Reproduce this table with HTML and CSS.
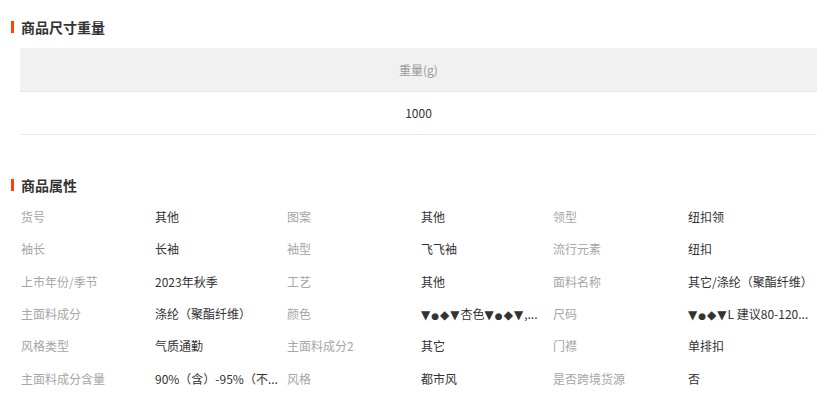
FILE: index.html
```html
<!DOCTYPE html>
<html lang="zh-CN">
<head>
<meta charset="utf-8">
<title>商品信息</title>
<link rel="stylesheet" href="styles.css">
</head>
<body>
<section class="section">
  <h2 class="title"><span class="bar"></span>商品尺寸重量</h2>
  <table class="size-table">
    <thead><tr><th>重量(g)</th></tr></thead>
    <tbody><tr><td>1000</td></tr></tbody>
  </table>
</section>
<section class="section attrs">
  <h2 class="title"><span class="bar"></span>商品属性</h2>
  <div class="grid">
    <div class="k">货号</div><div class="v">其他</div>
    <div class="k">图案</div><div class="v">其他</div>
    <div class="k">领型</div><div class="v">纽扣领</div>

    <div class="k">袖长</div><div class="v">长袖</div>
    <div class="k">袖型</div><div class="v">飞飞袖</div>
    <div class="k">流行元素</div><div class="v">纽扣</div>

    <div class="k">上市年份/季节</div><div class="v">2023年秋季</div>
    <div class="k">工艺</div><div class="v">其他</div>
    <div class="k">面料名称</div><div class="v">其它/涤纶（聚酯纤维）</div>

    <div class="k">主面料成分</div><div class="v">涤纶（聚酯纤维）</div>
    <div class="k">颜色</div><div class="v"><span class="sym">▼</span><span class="sym s">●</span><span class="sym">◆</span><span class="sym">▼</span>杏色<span class="sym">▼</span><span class="sym s">●</span><span class="sym">◆</span><span class="sym">▼</span>,...</div>
    <div class="k">尺码</div><div class="v"><span class="sym">▼</span><span class="sym s">●</span><span class="sym">◆</span><span class="sym">▼</span>L 建议80-120...</div>

    <div class="k">风格类型</div><div class="v">气质通勤</div>
    <div class="k">主面料成分2</div><div class="v">其它</div>
    <div class="k">门襟</div><div class="v">单排扣</div>

    <div class="k">主面料成分含量</div><div class="v">90%（含）-95%（不...</div>
    <div class="k">风格</div><div class="v">都市风</div>
    <div class="k">是否跨境货源</div><div class="v">否</div>
  </div>
</section>
</body>
</html>
```
FILE: styles.css
```css
* { box-sizing: border-box; }
html, body { margin: 0; padding: 0; background: #fff; }
body {
  font-family: "Noto Sans CJK SC", "Noto Sans", sans-serif;
  font-size: 12px;
  color: #333;
  width: 817px;
  overflow: hidden;
}
.section { padding-top: 17px; }
.attrs { padding-top: 40px; }
.title {
  display: flex;
  align-items: center;
  gap: 7px;
  margin: 0 0 0 11px;
  height: 20px;
  line-height: 20px;
  font-size: 14px;
  font-weight: bold;
  color: #333;
}
.bar {
  display: block;
  width: 3px;
  height: 12px;
  background: #ff4400;
}
.size-table {
  margin: 11px 0 0 20px;
  width: 797px;
  border-collapse: collapse;
}
.size-table th, .size-table td {
  text-align: center;
  height: 43px;
  padding: 0;
  border-bottom: 1px solid #e8e8e8;
  font-size: 12px;
}
.size-table th {
  background: #f1f1f1;
  color: #999;
  font-weight: normal;
}
.size-table td { color: #333; }
.grid {
  margin: 6px 0 0 21px;
  display: grid;
  grid-template-columns: 134px 132px 134px 132px 135px 129px;
  grid-auto-rows: 32.3px;
  align-items: center;
}
.k {
  color: #a6a6a6;
  white-space: nowrap;
}
.v {
  color: #333;
  white-space: nowrap;
}
.sym {
  font-family: "DejaVu Sans", sans-serif;
  font-size: 12px;
  margin-right: 1px;
}
.sym.s { font-size: 9px; }
```
